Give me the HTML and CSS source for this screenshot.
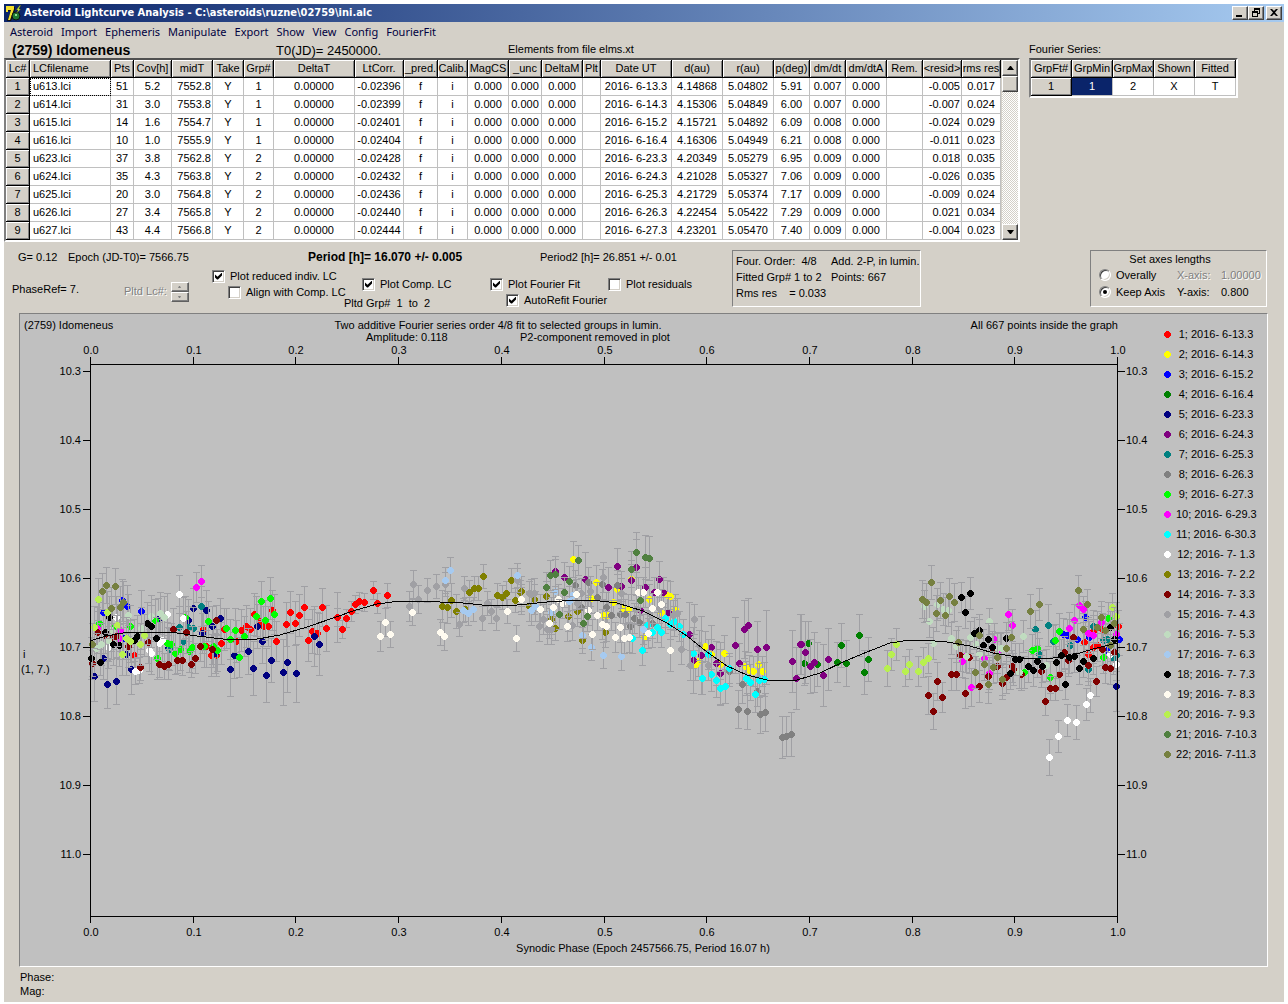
FILE: index.html
```html
<!DOCTYPE html>
<html lang="en">
<head>
<meta charset="utf-8">
<title>Asteroid Lightcurve Analysis</title>
<link rel="stylesheet" href="styles.css">
</head>
<body>
<div class="window">
  <header class="titlebar">
    <svg class="app-icon" width="17" height="17" viewBox="0 0 17 17" aria-hidden="true">
      <path d="M1 2h9v3L6 16H2L6 6H1z" fill="#111"/>
      <path d="M1 1h8v3L5 15H3L6 5H3v2H1z" fill="#f4e02c"/>
      <circle cx="11" cy="11" r="4" fill="#1d7a33" stroke="#111"/>
      <path d="M10 9h2v2h-2z" fill="#8fe08f"/>
      <path d="M15 0l-4 5h2l-2 4 5-5h-2l2-4z" fill="#c8f03c" stroke="#222" stroke-width=".5"/>
    </svg>
    <h1 class="caption">Asteroid Lightcurve Analysis - C:\asteroids\ruzne\02759\ini.alc</h1>
    <div class="window-buttons">
      <button class="win-btn" type="button" aria-label="Minimize"><svg width="12" height="10" viewBox="0 0 12 10"><path d="M2 7h6v2H2z"/></svg></button>
      <button class="win-btn" type="button" aria-label="Restore"><svg width="12" height="10" viewBox="0 0 12 10"><path d="M4 0h6v6H8V5h1V2H5v1H4zM2 3h6v6H2zM3 5v3h4V5z" fill-rule="evenodd"/></svg></button>
      <button class="win-btn win-close" type="button" aria-label="Close"><svg width="12" height="10" viewBox="0 0 12 10"><path d="M2 1h2l2 2 2-2h2L7 4.500l3 3.500H8L6 6 4 8H2l3-3.500z"/></svg></button>
    </div>
  </header>

  <nav class="menu">
    <a href="#">Asteroid</a><a href="#">Import</a><a href="#">Ephemeris</a><a href="#">Manipulate</a><a href="#">Export</a><a href="#">Show</a><a href="#">View</a><a href="#">Config</a><a href="#">FourierFit</a>
  </nav>

  <div class="tables">
    <section class="curves">
      <div class="object-line">
        <h2 class="object-name">(2759) Idomeneus</h2>
        <span class="object-t0">T0(JD)= 2450000.</span>
        <span>Elements from file elms.xt</span>
      </div>
      <div class="sunken grid-frame">
        <table class="grid" id="curves-table">
          <colgroup></colgroup><thead></thead><tbody></tbody>
        </table>
        <div class="scrollbar">
          <button class="scroll-btn" type="button" aria-label="Scroll up"><svg width="7" height="4" viewBox="0 0 7 4"><path d="M3 0h1l3 4H0z"/></svg></button>
          <div class="scroll-track"><div class="scroll-thumb"></div></div>
          <button class="scroll-btn" type="button" aria-label="Scroll down"><svg width="7" height="4" viewBox="0 0 7 4"><path d="M0 0h7L4 4H3z"/></svg></button>
        </div>
      </div>
    </section>
    <section class="fourier">
      <p class="fourier-title">Fourier Series:</p>
      <div class="sunken grid-frame">
        <table class="grid fourier-grid">
          <thead><tr><th>GrpFt#</th><th>GrpMin</th><th>GrpMax</th><th>Shown</th><th>Fitted</th></tr></thead>
          <tbody><tr><th>1</th><td class="selected">1</td><td>2</td><td>X</td><td>T</td></tr></tbody>
        </table>
      </div>
    </section>
  </div>

  <div class="controls">
    <div class="settings">
      <div class="readouts">
        <span class="read-g">G= 0.12</span>
        <span class="read-epoch">Epoch (JD-T0)= 7566.75</span>
        <strong class="read-period">Period [h]= 16.070 +/- 0.005</strong>
        <span>Period2 [h]= 26.851 +/- 0.01</span>
      </div>
      <div class="options">
        <span class="opt-phase">PhaseRef= 7.</span>
        <div class="opt-pltd">
          <span class="disabled">Pltd Lc#:</span>
          <span class="spinner">
            <button type="button" disabled aria-label="Increase"><svg width="5" height="3" viewBox="0 0 5 3"><path d="M2 0h1l1 2H1z" fill="#808080"/></svg></button>
            <button type="button" disabled aria-label="Decrease"><svg width="5" height="3" viewBox="0 0 5 3"><path d="M1 0h3L3 2H2z" fill="#808080"/></svg></button>
          </span>
        </div>
        <div class="opt-reduced">
          <label class="check"><input type="checkbox" checked>Plot reduced indiv. LC</label>
          <label class="check indent"><input type="checkbox">Align with Comp. LC</label>
        </div>
        <div class="opt-comp">
          <label class="check indent"><input type="checkbox" checked>Plot Comp. LC</label>
          <span class="groups">Pltd Grp#&nbsp; 1&nbsp; to&nbsp; 2</span>
        </div>
        <div class="opt-fit">
          <label class="check"><input type="checkbox" checked>Plot Fourier Fit</label>
          <label class="check indent"><input type="checkbox" checked>AutoRefit Fourier</label>
        </div>
        <div class="opt-resid">
          <label class="check"><input type="checkbox">Plot residuals</label>
        </div>
      </div>
    </div>
    <div class="panel summary">
      <span>Four. Order:&nbsp; 4/8</span><span>Add. 2-P, in lumin.</span>
      <span>Fitted Grp# 1 to 2</span><span>Points: 667</span>
      <span>Rms res &nbsp;&nbsp; = 0.033</span>
    </div>
    <fieldset class="panel axes">
      <legend class="axes-title">Set axes lengths</legend>
      <label class="check"><input type="radio" name="axes">Overally</label>
      <label class="disabled" for="x-axis">X-axis:</label><input class="disabled" id="x-axis" type="text" value="1.00000" disabled>
      <label class="check"><input type="radio" name="axes" checked>Keep Axis</label>
      <label for="y-axis">Y-axis:</label><input id="y-axis" type="text" value="0.800">
    </fieldset>
  </div>

  <main class="plot">
    <svg class="chart" id="chart" viewBox="20 314 1129 652" role="img" aria-label="Lightcurve of (2759) Idomeneus"></svg>
    <ul class="legend" id="legend"></ul>
  </main>

  <footer class="status">
    <p>Phase:</p>
    <p>Mag:</p>
  </footer>
</div>
<script src="app.js"></script>
</body>
</html>
```
FILE: styles.css
```css
* { box-sizing: border-box; }

body {
  margin: 0;
  padding: 4px 4px 0;
  background: #fff;
  color: #000;
  font: 11px/14px "Liberation Sans", Arial, sans-serif;
}

h1, h2, p, ul { margin: 0; padding: 0; font: inherit; }
button, input { font: inherit; color: inherit; }
ul { list-style: none; }

.window { background: #d4d0c8; }

.titlebar {
  display: flex;
  align-items: center;
  height: 18px;
  padding: 0 2px 0 1px;
  background: linear-gradient(90deg, #0a246a, #a6caf0);
  color: #fff;
}
.app-icon { flex: none; }
.caption {
  flex: 1;
  padding-left: 2px;
  font: bold 11px/18px "DejaVu Sans Condensed", "DejaVu Sans", sans-serif;
  white-space: nowrap;
}
.window-buttons { display: flex; }
.win-btn, .scroll-btn, .spinner button {
  display: flex;
  align-items: center;
  justify-content: center;
  padding: 0;
  background: #d4d0c8;
  border: 1px solid;
  border-color: #fff #404040 #404040 #fff;
  box-shadow: inset -1px -1px #808080;
}
.win-btn { width: 16px; height: 14px; }
.win-btn svg { flex: none; }
.win-close { margin-left: 2px; }

.menu {
  display: flex;
  gap: 8px;
  height: 20px;
  padding: 0 6px;
  font: 11px/20px "Noto Sans", "Open Sans", sans-serif;
}
.menu a { color: #000040; text-decoration: none; }

.tables { display: flex; gap: 9px; }
.object-line {
  display: flex;
  height: 16px;
  padding-left: 8px;
}
.object-name { width: 264px; font: bold 14px/17px "Liberation Sans", Arial, sans-serif; }
.object-t0 { width: 232px; font-size: 13px; line-height: 17px; }
.fourier-title { height: 16px; }

.sunken {
  border: 1px solid;
  border-color: #808080 #fff #fff #808080;
}
.grid-frame {
  display: flex;
  width: max-content;
  border-width: 2px;
  border-top-color: #505050;
}
.grid {
  table-layout: fixed;
  border-spacing: 0;
  width: 995px;
  background: #fff;
}
.grid th, .grid td {
  height: 18px;
  padding: 0;
  border-right: 1px solid #c0c0c0;
  border-bottom: 1px solid #c0c0c0;
  font-weight: normal;
  line-height: 17px;
  text-align: center;
  white-space: pre;
  overflow: hidden;
}
.grid th {
  background: #d4d0c8;
  border-color: #000;
  box-shadow: inset 1px 1px #fff, inset -1px -1px #808080;
}
.grid .left { text-align: left; padding-left: 3px; }
.grid td.right { text-align: right; padding-right: 1px; }
.grid td.focus { outline: 1px dotted #000; outline-offset: -1px; }
.grid td.selected { background: #0a246a; color: #fff; }
.fourier-grid { width: 205px; }

.scrollbar { display: flex; flex-direction: column; width: 17px; padding-left: 1px; }
.scroll-btn { height: 16px; flex: none; }
.scroll-track {
  flex: 1;
  background: repeating-conic-gradient(#fff 0 25%, #d4d0c8 0 50%) 0 0 / 2px 2px;
}
.scroll-thumb {
  height: 16px;
  background: #d4d0c8;
  border: 1px solid;
  border-color: #fff #404040 #404040 #fff;
  box-shadow: inset -1px -1px #808080;
}

.controls {
  display: flex;
  align-items: flex-start;
  height: 71px;
  padding: 8px 17px 0 8px;
}
.settings { width: 720px; flex: none; }
.readouts { display: flex; padding-left: 6px; }
.read-g { width: 50px; }
.read-epoch { width: 240px; }
.read-period { width: 232px; font-size: 12px; }
.options { display: flex; align-items: flex-start; padding-top: 4px; }
.opt-phase { width: 112px; padding-top: 14px; }
.opt-pltd { display: flex; gap: 4px; width: 88px; padding-top: 14px; line-height: 18px; }
.opt-reduced { width: 132px; }
.opt-comp { width: 146px; padding-top: 8px; }
.opt-fit { width: 118px; padding-top: 8px; }
.opt-resid { padding-top: 8px; }
.groups { display: block; line-height: 22px; }
.indent { margin-left: 16px; }
.opt-comp .indent { margin-left: 18px; }
.disabled { color: #808080; text-shadow: 1px 1px #fff; }

.spinner { display: grid; width: 18px; height: 20px; }
.spinner button { border-color: #fff #606060 #606060 #fff; }

.check {
  display: flex;
  align-items: center;
  gap: 5px;
  height: 16px;
  white-space: nowrap;
}
.check input {
  appearance: none;
  flex: none;
  width: 13px;
  height: 13px;
  margin: 0;
  background: #fff;
  border: 1px solid;
  border-color: #808080 #fff #fff #808080;
  box-shadow: inset 1px 1px #404040, inset -1px -1px #d4d0c8;
}
.check input[type="checkbox"]:checked::before {
  content: "";
  display: block;
  width: 7px;
  height: 7px;
  margin: 2px;
  background: #000;
  clip-path: polygon(0 29%, 0 71%, 29% 100%, 43% 100%, 100% 43%, 100% 0, 36% 60%);
}
.check input[type="radio"] { width: 12px; height: 12px; border-radius: 50%; }
.check input[type="radio"]:checked::before {
  content: "";
  display: block;
  width: 4px;
  height: 4px;
  margin: 3px;
  border-radius: 50%;
  background: #000;
}

.panel {
  height: 57px;
  margin: 0;
  border: 1px solid;
  border-color: #808080 #fff #fff #808080;
  white-space: nowrap;
}
.summary {
  display: grid;
  flex: none;
  grid-template-columns: 95px 1fr;
  grid-auto-rows: 16px;
  width: 189px;
  padding: 3px 0 0 3px;
}
.axes {
  display: grid;
  grid-template-columns: 78px 44px 44px;
  grid-template-rows: 15px 17px 17px;
  align-items: center;
  width: 177px;
  margin-left: auto;
  padding: 0 0 0 8px;
}
.axes-title { grid-column: 1 / -1; float: left; width: 100%; padding: 0 24px 0 0; text-align: center; }
.axes input[type="text"] { width: 44px; padding: 0; border: 0; background: none; }

.plot {
  display: flex;
  align-items: flex-start;
  margin: 0 16px 0 15px;
  background: #c0c0c0;
  border: 1px solid;
  border-color: #808080 #fff #fff #808080;
}
.chart { display: block; flex: 1; min-width: 0; height: auto; overflow: visible; }
.chart text { font-size: 11px; white-space: pre; }
.chart .mid { text-anchor: middle; }
.chart .end { text-anchor: end; }
.bars, .axis, .curve { fill: none; shape-rendering: crispEdges; }
.bars { stroke: #a0a0a4; }
.axis, .curve { stroke: #000; }
.dots { shape-rendering: crispEdges; }

.legend { flex: none; width: 118px; padding: 10px 11px 0 15px; }
.legend li { display: flex; align-items: center; gap: 5px; height: 20px; white-space: pre; }
.legend svg { flex: none; }
.legend span { flex: 1; text-align: center; }

.status { padding: 3px 16px 4px; border-bottom: 1px solid #fff; margin-bottom: 2px; }
```
FILE: app.js
```js
// ---- Lightcurve table ----
const columns = [
  ['Lc#', 24], ['LCfilename', 81, 'left'], ['Pts', 23], ['Cov[h]', 38], ['midT', 41, 'right'],
  ['Take', 31], ['Grp#', 30], ['DeltaT', 81], ['LtCorr.', 49], ['_pred.', 34], ['Calib.', 30],
  ['MagCS', 41], ['_unc', 33], ['DeltaM', 41], ['Plt', 18], ['Date UT', 71], ['d(au)', 51],
  ['r(au)', 51], ['p(deg)', 36], ['dm/dt', 36], ['dm/dtA', 41], ['Rem.', 36], ['<resid>', 39, 'right'], ['rms res', 39]
];
// file, points, coverage, mid time, group, light-time, date, d, r, phase, dm/dt, residual, rms
const curves = `613|51|5.2|7552.8|1|-0.02396|6-13.3|4.14868|5.04802|5.91|0.007|-0.005|0.017
614|31|3.0|7553.8|1|-0.02399|6-14.3|4.15306|5.04849|6.00|0.007|-0.007|0.024
615|14|1.6|7554.7|1|-0.02401|6-15.2|4.15721|5.04892|6.09|0.008|-0.024|0.029
616|10|1.0|7555.9|1|-0.02404|6-16.4|4.16306|5.04949|6.21|0.008|-0.011|0.023
623|37|3.8|7562.8|2|-0.02428|6-23.3|4.20349|5.05279|6.95|0.009|0.018|0.035
624|35|4.3|7563.8|2|-0.02432|6-24.3|4.21028|5.05327|7.06|0.009|-0.026|0.035
625|20|3.0|7564.8|2|-0.02436|6-25.3|4.21729|5.05374|7.17|0.009|-0.009|0.024
626|27|3.4|7565.8|2|-0.02440|6-26.3|4.22454|5.05422|7.29|0.009|0.021|0.034
627|43|4.4|7566.8|2|-0.02444|6-27.3|4.23201|5.05470|7.40|0.009|-0.004|0.023`;

const table = document.getElementById('curves-table');
const head = table.tHead.insertRow();
for (const [title, width, align] of columns) {
  const col = document.createElement('col');
  col.style.width = width + 'px';
  table.querySelector('colgroup').append(col);
  const th = document.createElement('th');
  th.textContent = title;
  if (align === 'left') th.className = 'left';
  head.append(th);
}
curves.split('\n').forEach((line, i) => {
  const [file, pts, cov, mid, grp, lt, date, d, r, p, dm, resid, rms] = line.split('|');
  const cells = [i + 1, `u${file}.lci`, pts, cov, mid, 'Y', grp, '0.00000', lt, 'f', 'i', '0.000', '0.000',
    '0.000', '', `2016- ${date}`, d, r, p, dm, '0.000', '', resid, rms];
  const row = table.tBodies[0].insertRow();
  cells.forEach((value, c) => {
    const cell = document.createElement(c ? 'td' : 'th');
    cell.textContent = value;
    if (columns[c][2]) cell.classList.add(columns[c][2]);
    if (i === 0 && c === 1) cell.classList.add('focus');
    row.append(cell);
  });
});

// ---- Series ----
const series = [
  ['#ff0000', ' 6-13.3'], ['#ffff00', ' 6-14.3'], ['#0000ff', ' 6-15.2'], ['#008000', ' 6-16.4'],
  ['#000080', ' 6-23.3'], ['#800080', ' 6-24.3'], ['#008080', ' 6-25.3'], ['#808080', ' 6-26.3'],
  ['#00ff00', ' 6-27.3'], ['#ff00ff', ' 6-29.3'], ['#00ffff', ' 6-30.3'], ['#ffffff', ' 7- 1.3'],
  ['#808000', ' 7- 2.2'], ['#800000', ' 7- 3.3'], ['#a0a0a4', ' 7- 4.3'], ['#c0dcc0', ' 7- 5.3'],
  ['#a6caf0', ' 7- 6.3'], ['#000000', ' 7- 7.3'], ['#fffbf0', ' 7- 8.3'], ['#b8f050', ' 7- 9.3'],
  ['#508040', ' 7-10.3'], ['#768040', ' 7-11.3']
];
const dot = (x, y) => `M${x - 1} ${y - 3}h3v1h1v1h1v3h-1v1h-1v1h-3v-1h-1v-1h-1v-3h1v-1h1z`;

document.getElementById('legend').innerHTML = series.map(([color, date], i) =>
  `<li><svg width="7" height="7"><path class="dots" fill="${color}" d="${dot(3, 3)}"/></svg><span>${i + 1}; 2016-${date}</span></li>`
).join('');

// Observations by phase block. Each reading is "x,y,error" in thirds of a
// plot unit from the block's origin; a missing error takes the block's own.
const blocks = [
  { x: 80, y: 560, error: 62, readings: {
    1: '772,172,75 739,205,69 727,142,58 697,214,66 712,220 684,241,63 673,142 658,166 646,190,66 619,193,66 631,157,63 589,244,60 577,151,60 522,163 499,199 511,208 484,211 469,244 424,250 433,208 370,208 379,259 395,287 410,287 164,287,40 550,199,60 564,199,60 541,184,60',
    3: '184,154 142,140 70,157 127,122 130,235',
    5: '340,145,60 379,151,60 421,175,60 396,199,60 367,220,60 325,181 235,178 532,199,66 547,244,66 505,274,70 463,287,70 451,328,82 520,325,80 574,301,66 559,346,80 610,337,100 622,307,90 649,340,86 703,229,90 718,253,93 82,373,73 109,364,70 43,349,75 154,328,74 70,295 139,283 406,280,60 265,265',
    7: '364,139,60 298,202 325,202 340,205 310,244 268,268',
    9: '58,190 316,172 385,184,60 439,205,60 466,211,66 451,238,60 493,229,60 478,293,60 544,124,60 571,115,63 529,169,60 583,163,60 556,181,60 226,181 262,250 274,253 286,280 301,268 328,274 337,262 373,259 400,259 412,271 232,295 97,205 150,200',
    10: '364,64,48 349,82,45 121,212 52,205 118,236',
    12: '262,163 298,103,57 309,175 109,172 247,241 238,250 209,271 214,280 166,334,40 85,262 178,331,40',
    14: '409,181,45 319,217 280,208 361,259,45 397,268,45 346,295,45 334,313,40 307,301,45 292,301,40 265,313,45 253,319,40 238,313,40 181,322,40 205,247 94,235 82,232 52,217 109,229 145,260 37,310,40',
    16: '145,166 241,160 215,170 95,212 64,253 50,266,45 253,172 85,240 184,205',
    18: '88,172 201,190 213,199 76,218 100,253 118,256 229,235 172,230 163,240 61,307,40 34,296',
    20: '55,118 82,157 43,202 111,196 193,226 139,235 151,245 181,254 127,283',
    22: '79,76,54 67,94,54 106,78,54 94,145 131,128 121,142 37,254'
  } },
  { x: 330, y: 540, error: 36, readings: {
    1: '22,232,27 37,268,27 49,235,27 64,214,30 76,193,27 88,184,27 103,187,27 130,151,27 142,190,30 172,166',
    13: '337,199,48 352,202,48 364,181,50 379,214,50 418,157 433,145 445,145 460,109 502,166 517,172 529,160 544,121 556,181 571,157 406,208',
    15: '250,133,42 265,178,42 238,199,45 292,151 319,139 346,133 403,145 388,253 457,235 472,190 484,214 499,235 562,121 598,160',
    17: '361,91,39 346,121,39 400,211 415,220 430,208 562,106',
    19: '247,217,39 151,289,45 166,247,42 181,283,39 331,277,39 343,289,42 532,214 559,295,39 574,178'
  } },
  { x: 520, y: 540, error: 44, readings: {
    2: '160,58,54 229,127,51 292,148 334,118 280,187 310,205 325,208 214,175 250,226 262,226 388,178 424,217 442,166 452,169 467,208 373,292 556,319 574,343 613,340,54 526,376 536,365 601,373 676,379 688,391 700,395 715,373 727,394',
    6: '106,94 133,112 196,118,81 265,142,60 292,79,54 304,139 349,82,84 334,121,60 376,142,60 418,119,54 430,157 403,157 445,217 361,211 508,283,96 520,361,100 545,346,116 574,322,66 589,370,66 601,400,93 646,316,84 673,268,87 685,256,80 658,370,60 712,328,84 739,322,111 817,364,93 829,415,93 840,313,90',
    8: '205,127 247,133 166,136 292,136 259,202 274,226 301,223 316,223 343,235 358,248 331,259 232,172 184,202 397,250 628,394 667,433,57 712,455 655,508,57 682,514,54 721,523,57 736,517,57 787,592,63 799,589,60 814,583,66',
    11: '367,331 337,295 382,256 397,277 412,262 424,277 436,235 451,253 463,244 478,259 490,283 520,340 547,415,48 574,403,50 589,421,50 601,445,50 616,439,50 628,385 565,343 679,415,50 691,427,54 706,463,54 718,421,50 733,418,50',
    13: '4,155 43,178 28,199 79,169 146,229 172,214 106,265,36 187,301,38 256,277 94,238',
    15: '250,112 211,154 184,160 43,160 34,163 58,259 70,238 82,268 94,268 157,256 172,190 304,160 460,226 472,220 523,238 484,328 511,376 538,316 565,376 349,208 388,220 418,205',
    17: '106,154 157,166 148,184 34,211 46,199 94,217 187,286,39 214,322,39 250,346,39 304,349,42 370,268',
    19: '4,178 61,208 100,202 115,178 127,190 169,163 205,211 232,226 88,250 142,259 247,253 259,259 301,262 217,283 286,292 313,295 328,292 385,280 451,331,63 355,157 370,157 412,157 424,193 397,205',
    21: '349,37,60 376,52,66 388,55,66 175,61 334,88,54 91,106 106,103 148,124 79,142 133,157 361,181 118,223 202,229 190,250'
  } },
  { x: 800, y: 560, error: 48, readings: {
    1: '853,247 865,283 880,262 892,256 955,199 880,214 907,208',
    3: '802,226 856,172 832,238 868,232 922,271 958,238 790,222',
    4: '25,250,66 12,310,66 52,313,66 112,307,60 124,256,66 139,310,69 178,226,63 193,337,66 205,298,66',
    5: '949,379,75',
    6: '4,253,90 16,277,93 42,307,90 31,319,80 70,346,93 85,298,93',
    7: '706,208,57 745,196,63 760,244 811,256 880,199 910,241 922,238 718,283 865,328 940,295 950,286',
    9: '697,271 712,265 778,214,54 766,241 751,352 673,337 925,175 910,292',
    10: '625,163 637,196 583,238 514,382,57 487,304 496,289 553,295 568,340 601,268 808,205 823,181 838,136,40 850,148,40 865,220 904,187 880,226 950,223',
    12: '748,592,54 775,529 802,481 829,487,51 859,433 871,406,51 949,313 931,283',
    14: '385,406,57 400,454,54 427,412,45 412,364,57 454,343 469,343 496,400,45 538,379 565,349 481,286 508,292 580,268 592,319 607,370 619,352 637,319 640,328 664,343 724,334 736,424,42 751,385,36 766,385,36 779,343 793,277 805,301 820,232 865,316 889,364,45 907,268 916,322 931,325 943,277',
    16: '374,139 388,184 412,133 430,148 445,152 400,250 454,235 469,259 511,232 529,253 538,283 568,184,38 499,289 592,265 605,265 670,229 739,316 658,337',
    18: '484,112,45 511,100 496,157 523,220 538,211 565,238 550,256 577,262 619,235 646,298 658,298 631,340 685,319 700,331 712,304 727,319 769,307 784,286 796,373,45 808,292 823,289 838,325 850,304 880,295 931,202 943,238',
    20: '262,325,54 274,283 289,253 316,334,45 328,313,45 355,334,45 370,307,45 385,295,45 937,142,42 950,169,42',
    22: '394,67,51 367,118,57 379,127,57 421,121,54 448,109,54 463,127,57 409,160,54 436,166,54 475,247 538,226 526,337 553,313 565,373,57 580,322 592,292 607,358 619,265 634,232 691,154,51 718,133 835,91,45 862,133,45 904,172 850,208 892,202 916,211 943,190 931,256'
  } }
];

let out = '';
for (let s = 1; s <= series.length; s++) {
  let bars = '', dots = '';
  for (const block of blocks) {
    for (const reading of (block.readings[s] || '').split(' ').filter(Boolean)) {
      const [rx, ry, re = block.error] = reading.split(',').map(Number);
      const x = block.x + Math.floor(rx / 3), y = block.y + Math.floor(ry / 3), e = Math.round(re / 3);
      bars += `M${x - 3} ${y - e + .5}h7M${x - 3} ${y + e + .5}h7M${x + .5} ${y - e}v${2 * e}`;
      dots += dot(x, y);
    }
  }
  if (dots) out += `<path class="bars" d="${bars}"/><path class="dots" fill="${series[s - 1][0]}" d="${dots}"/>`;
}

// Fitted Fourier curve
out += '<polyline class="curve" points="90,641 106,636 123,633 147,632 177,633 197,636 223,639 257,639 280,635 307,627 339,616 353,611 377,604 400,601 417,601 440,602 463,603 482,605 517,605 547,602 577,600 600,601 617,603 643,611 667,623 687,636 707,652 727,666 747,675 767,680 780,681 797,680 820,673 843,662 867,652 890,643 910,640 923,640 947,642 970,646 993,653 1017,657 1030,659 1053,658 1073,655 1093,649 1117,643"/>';

// Axes, ticks and their labels
let axis = 'M90.5 357V923M1117.5 357V923M90 364.500H1118M90 916.500H1118';
const label = (x, y, text, cls = '') => `<text class="${cls}" x="${x}" y="${y}">${text}</text>`;
for (let i = 0; i <= 10; i++) {
  const x = 90 + Math.round(i * 102.7);
  axis += `M${x + .5} 357v7M${x + .5} 916v7`;
  out += label(x + 1, 354, (i / 10).toFixed(1), 'mid') + label(x + 1, 936, (i / 10).toFixed(1), 'mid');
}
for (let i = 0; i <= 7; i++) {
  const y = 371 + 69 * i;
  axis += `M83 ${y + .5}h7M1118 ${y + .5}h7`;
  out += label(81, y + 4, (10.3 + i / 10).toFixed(1), 'end') + label(1126, y + 4, (10.3 + i / 10).toFixed(1));
}
out += `<path class="axis" d="${axis}"/>`;
out += label(24, 329, '(2759) Idomeneus');
out += label(498, 329, 'Two additive Fourier series order 4/8 fit to selected groups in lumin.', 'mid');
out += label(366, 341, 'Amplitude: 0.118') + label(520, 341, 'P2-component removed in plot');
out += label(1118, 329, 'All 667 points inside the graph', 'end');
out += label(23, 658, 'i') + label(21, 673, '(1, 7.)');
out += label(643, 952, 'Synodic Phase (Epoch 2457566.75, Period 16.07 h)', 'mid');
document.getElementById('chart').innerHTML = out;
```
